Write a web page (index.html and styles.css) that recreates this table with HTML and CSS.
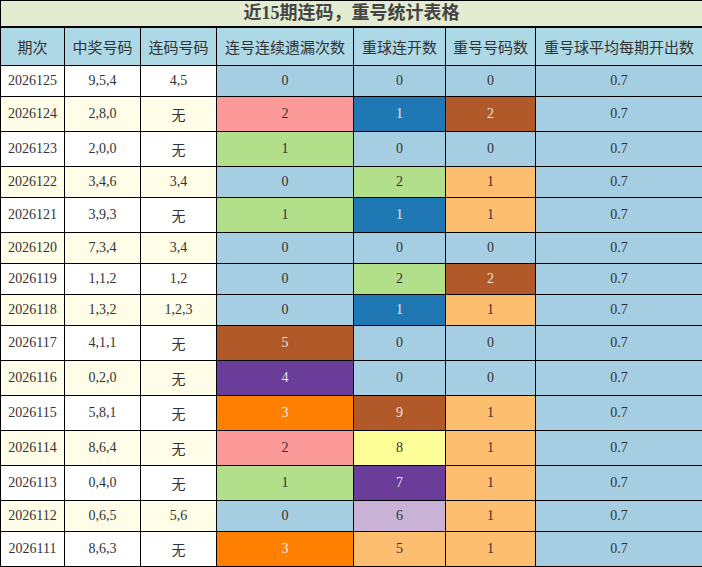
FILE: index.html
```
<!DOCTYPE html>
<html lang="zh">
<head>
<meta charset="utf-8">
<title>近15期连码，重号统计表格</title>
<link rel="stylesheet" href="styles.css">
</head>
<body>
<table class="stats">
  <colgroup>
    <col class="c1"><col class="c2"><col class="c3"><col class="c4"><col class="c5"><col class="c6"><col class="c7">
  </colgroup>
  <thead>
    <tr><th class="title" colspan="7">近15期连码，重号统计表格</th></tr>
    <tr class="head">
      <th>期次</th><th>中奖号码</th><th>连码号码</th><th>连号连续遗漏次数</th><th>重球连开数</th><th>重号号码数</th><th>重号球平均每期开出数</th>
    </tr>
  </thead>
  <tbody>
    <tr class="w"><td>2026125</td><td>9,5,4</td><td>4,5</td><td class="lb">0</td><td class="lb">0</td><td class="lb">0</td><td class="lb">0.7</td></tr>
    <tr class="y"><td>2026124</td><td>2,8,0</td><td>无</td><td class="pk">2</td><td class="db">1</td><td class="br">2</td><td class="lb">0.7</td></tr>
    <tr class="w"><td>2026123</td><td>2,0,0</td><td>无</td><td class="lg">1</td><td class="lb">0</td><td class="lb">0</td><td class="lb">0.7</td></tr>
    <tr class="y"><td>2026122</td><td>3,4,6</td><td>3,4</td><td class="lb">0</td><td class="lg">2</td><td class="lo">1</td><td class="lb">0.7</td></tr>
    <tr class="w"><td>2026121</td><td>3,9,3</td><td>无</td><td class="lg">1</td><td class="db">1</td><td class="lo">1</td><td class="lb">0.7</td></tr>
    <tr class="y"><td>2026120</td><td>7,3,4</td><td>3,4</td><td class="lb">0</td><td class="lb">0</td><td class="lb">0</td><td class="lb">0.7</td></tr>
    <tr class="w"><td>2026119</td><td>1,1,2</td><td>1,2</td><td class="lb">0</td><td class="lg">2</td><td class="br">2</td><td class="lb">0.7</td></tr>
    <tr class="y"><td>2026118</td><td>1,3,2</td><td>1,2,3</td><td class="lb">0</td><td class="db">1</td><td class="lo">1</td><td class="lb">0.7</td></tr>
    <tr class="w"><td>2026117</td><td>4,1,1</td><td>无</td><td class="br">5</td><td class="lb">0</td><td class="lb">0</td><td class="lb">0.7</td></tr>
    <tr class="y"><td>2026116</td><td>0,2,0</td><td>无</td><td class="pu">4</td><td class="lb">0</td><td class="lb">0</td><td class="lb">0.7</td></tr>
    <tr class="w"><td>2026115</td><td>5,8,1</td><td>无</td><td class="or">3</td><td class="br">9</td><td class="lo">1</td><td class="lb">0.7</td></tr>
    <tr class="y"><td>2026114</td><td>8,6,4</td><td>无</td><td class="pk">2</td><td class="ye">8</td><td class="lo">1</td><td class="lb">0.7</td></tr>
    <tr class="w"><td>2026113</td><td>0,4,0</td><td>无</td><td class="lg">1</td><td class="pu">7</td><td class="lo">1</td><td class="lb">0.7</td></tr>
    <tr class="y"><td>2026112</td><td>0,6,5</td><td>5,6</td><td class="lb">0</td><td class="lv">6</td><td class="lo">1</td><td class="lb">0.7</td></tr>
    <tr class="w"><td>2026111</td><td>8,6,3</td><td>无</td><td class="or">3</td><td class="lo">5</td><td class="lo">1</td><td class="lb">0.7</td></tr>
  </tbody>
</table>
</body>
</html>
```
FILE: styles.css
```
html, body {
  margin: 0;
  padding: 0;
  background: #ffffff;
}

.stats {
  width: 702px;
  table-layout: fixed;
  border-collapse: collapse;
  font-family: "Liberation Serif", "Noto Sans CJK SC", serif;
  font-size: 14px;
  color: #333333;
}

.c1 { width: 64px; }
.c2 { width: 76px; }
.c3 { width: 76px; }
.c4 { width: 137px; }
.c5 { width: 92px; }
.c6 { width: 90px; }
.c7 { width: 167px; }

.stats th,
.stats td {
  border: 1px solid #000000;
  text-align: center;
  padding: 7px 2px;
  white-space: nowrap;
  overflow: hidden;
}

.stats .title {
  background: #e3ebd0;
  color: #444444;
  font-size: 18px;
  font-weight: bold;
  line-height: 25px;
  padding: 0;
  border-bottom: 2px solid #000000;
}

.head th {
  background: #add8e6;
  font-weight: normal;
  font-size: 15px;
  color: #333333;
  padding: 8px 2px;
}

.w td { background: #ffffff; }
.y td { background: #fffde7; }

.stats td.lb { background: #a6cee3; }
.stats td.db { background: #1f78b4; color: #e6e6e6; }
.stats td.lg { background: #b2df8a; }
.stats td.pk { background: #fb9a99; }
.stats td.or { background: #ff7f00; color: #eeeeee; }
.stats td.lo { background: #fdbf6f; }
.stats td.lv { background: #cab2d6; }
.stats td.pu { background: #6a3d9a; color: #e6e6e6; }
.stats td.ye { background: #ffff99; }
.stats td.br { background: #b15928; color: #e6e6e6; }
```
